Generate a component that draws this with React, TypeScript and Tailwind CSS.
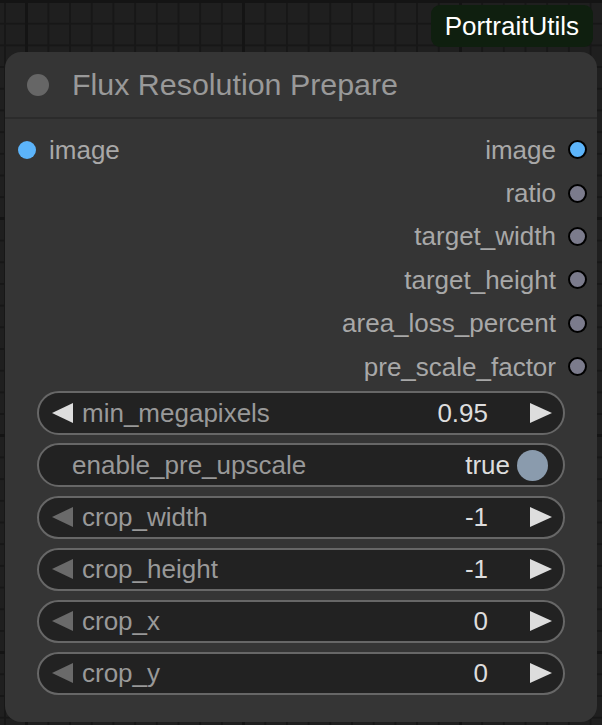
import React from "react";

type Widget =
  | { kind: "number"; label: string; value: string; leftOff?: boolean }
  | { kind: "toggle"; label: string; value: string };

const outputs = [
  { name: "image", color: "bg-[#5cb4fa]" },
  { name: "ratio", color: "bg-[#7b7b8c]" },
  { name: "target_width", color: "bg-[#7b7b8c]" },
  { name: "target_height", color: "bg-[#7b7b8c]" },
  { name: "area_loss_percent", color: "bg-[#7b7b8c]" },
  { name: "pre_scale_factor", color: "bg-[#7b7b8c]" },
];

const widgets: Widget[] = [
  { kind: "number", label: "min_megapixels", value: "0.95" },
  { kind: "toggle", label: "enable_pre_upscale", value: "true" },
  { kind: "number", label: "crop_width", value: "-1", leftOff: true },
  { kind: "number", label: "crop_height", value: "-1", leftOff: true },
  { kind: "number", label: "crop_x", value: "0", leftOff: true },
  { kind: "number", label: "crop_y", value: "0", leftOff: true },
];

function ArrowLeft({ off }: { off?: boolean }) {
  return (
    <svg width="21" height="20" viewBox="0 0 21 20" className="shrink-0">
      <polygon points="21,0 21,20 0,10" fill={off ? "#6a6a6a" : "#dddddd"} />
    </svg>
  );
}

function ArrowRight() {
  return (
    <svg width="22" height="20" viewBox="0 0 22 20" className="shrink-0">
      <polygon points="0,0 0,20 22,10" fill="#dddddd" />
    </svg>
  );
}

function WidgetRow({ w }: { w: Widget }) {
  if (w.kind === "toggle") {
    return (
      <div className="h-[43.4px] rounded-full border-2 border-[#676767] bg-[#222222] flex items-center pl-[33px] pr-[15px]">
        <span className="flex-1 text-[#999999]">{w.label}</span>
        <span className="text-[#dddddd]">{w.value}</span>
        <span className="ml-[7px] w-[31px] h-[31px] rounded-full bg-[#8a9bad]" />
      </div>
    );
  }
  return (
    <div className="h-[43.4px] rounded-full border-2 border-[#676767] bg-[#222222] flex items-center pl-[13px] pr-[11px]">
      <ArrowLeft off={w.leftOff} />
      <span className="ml-[9px] flex-1 text-[#999999]">{w.label}</span>
      <span className="text-[#dddddd]">{w.value}</span>
      <span className="ml-[42px] flex">
        <ArrowRight />
      </span>
    </div>
  );
}

export default function App() {
  return (
    <div className="w-[602px] h-[725px] overflow-hidden font-['Liberation_Sans',Arial,sans-serif] [background-color:#1f1f1f] [background-image:linear-gradient(to_right,#141414_3px,transparent_3px),linear-gradient(to_bottom,#141414_3px,transparent_3px),linear-gradient(to_right,#171717_2px,transparent_2px),linear-gradient(to_bottom,#171717_2px,transparent_2px)] [background-size:217px_217px,217px_217px,21.7px_21.7px,21.7px_21.7px] [background-position:25px_0,0_0,4px_0,0_1px]">
      {/* group badge */}
      <div className="flex justify-end pt-[5px] pr-[9px]">
        <div className="h-[42px] px-[14px] rounded-[9px] bg-[#0f1f0f] text-white text-[26px] leading-none flex items-center">
          PortraitUtils
        </div>
      </div>

      {/* node */}
      <div className="mt-[5px] ml-[5px] w-[592px] h-[670px] rounded-[16px] bg-[#353535] text-[26px] leading-none">
        <div className="h-[67px] border-b-2 border-[#2b2b2b] flex items-center pl-[22px]">
          <span className="w-[22px] h-[22px] rounded-full bg-[#666666]" />
          <span className="ml-[23px] text-[30.4px] text-[#999999]">Flux Resolution Prepare</span>
        </div>

        <div className="pt-[9px]">
          {outputs.map((o, i) => (
            <div key={o.name} className="h-[43.4px] flex items-center pl-[13px] pr-[10px]">
              {i === 0 && (
                <>
                  <span className="w-[18px] h-[18px] rounded-full bg-[#5cb4fa]" />
                  <span className="ml-[13px] text-[#a8a8a8]">image</span>
                </>
              )}
              <span className="flex-1" />
              <span className="text-[#a8a8a8]">{o.name}</span>
              <span className={`ml-[12px] w-[19px] h-[19px] rounded-full border-2 border-black ${o.color}`} />
            </div>
          ))}
        </div>

        <div className="mt-[3px] mx-[32px] flex flex-col gap-[8.7px]">
          {widgets.map((w) => (
            <WidgetRow key={w.label} w={w} />
          ))}
        </div>
      </div>
    </div>
  );
}
